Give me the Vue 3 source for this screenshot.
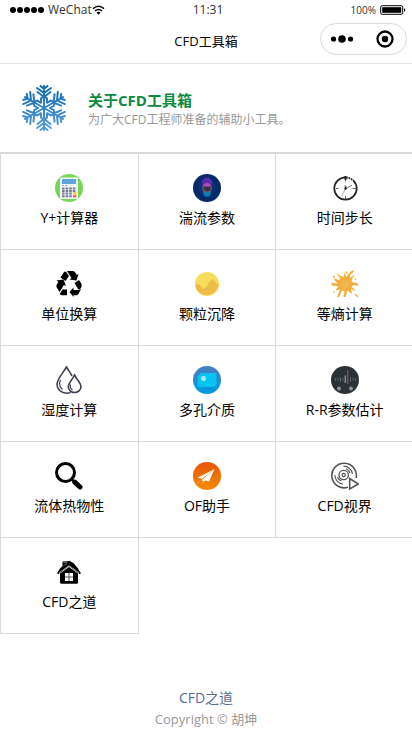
<template>
    <div class="page">
        <header>
            <div class="status-bar">
                <div class="status-left">
                    <svg class="signal" width="35" height="8" viewBox="0 0 35 8">
                        <circle v-for="n in 5" :key="n" :cx="n * 7 - 3" cy="4" r="3" />
                    </svg>
                    <span>WeChat</span>
                    <svg class="wifi" width="13" height="10" viewBox="0 0 13 10">
                        <path d="M1 3.6Q6.5 -1 12 3.6M3 5.9Q6.5 3 10 5.9" fill="none" stroke="#000" stroke-width="1.5" />
                        <path d="M4.5 7.5Q6.5 6 8.5 7.5L6.5 9.7z" />
                    </svg>
                </div>
                <span class="status-time">11:31</span>
                <div class="status-right">
                    <span>100%</span>
                    <svg width="27" height="10" viewBox="0 0 27 10">
                        <rect x=".7" y=".7" width="22" height="8.6" rx="1.5" fill="#fff" stroke="#000" />
                        <rect x="2.2" y="2.2" width="19" height="5.6" />
                        <path d="M24 3Q26.5 5 24 7z" />
                    </svg>
                </div>
            </div>
            <div class="nav-bar">
                <h1 class="nav-title">CFD工具箱</h1>
                <div class="capsule">
                    <button type="button" aria-label="更多">
                        <svg width="24" height="10" viewBox="0 0 24 10">
                            <circle cx="3.5" cy="5" r="2.6" />
                            <circle cx="12" cy="5" r="3.8" />
                            <circle cx="20.5" cy="5" r="2.6" />
                        </svg>
                    </button>
                    <button type="button" aria-label="关闭">
                        <svg width="18" height="18" viewBox="0 0 18 18">
                            <circle cx="9" cy="9" r="7.5" fill="none" stroke="#000" stroke-width="2.3" />
                            <circle cx="9" cy="9" r="3.2" />
                        </svg>
                    </button>
                </div>
            </div>
        </header>

        <a class="about" href="#about">
            <svg class="about-logo" width="48" height="48" viewBox="-24 -24 48 48">
                <defs>
                    <linearGradient id="snow" gradientUnits="userSpaceOnUse" x1="0" y1="-23" x2="0" y2="23">
                        <stop offset="0" stop-color="#0f68b0" />
                        <stop offset="1" stop-color="#5b9fd8" />
                    </linearGradient>
                </defs>
                <path :d="snowPath" fill="none" stroke="url(#snow)" stroke-width="2" stroke-linecap="round" />
            </svg>
            <div class="about-text">
                <div class="about-title">关于CFD工具箱</div>
                <div class="about-desc">为广大CFD工程师准备的辅助小工具。</div>
            </div>
        </a>

        <main class="grid">
            <a class="grid-item" v-for="item in tools" :key="item.icon" :href="'#' + item.icon">
                <svg class="grid-icon" viewBox="0 0 28 28">
                    <g v-if="item.icon === 'yplus'">
                        <circle cx="14" cy="14" r="14" fill="#76d55b" />
                        <rect x="5" y="3.5" width="18" height="21.5" rx="1" fill="#f4f5f8" />
                        <rect x="7" y="5" width="14" height="5" fill="#5aa6dc" />
                        <path d="M7 11.5H12.5" stroke="#969bab" stroke-dasharray="2 1" />
                        <path d="M7 14.5H21M7 17H21M7 19.5H17M7 22.2H17" stroke="#747b93" stroke-width="2" stroke-dasharray="2.6 1" />
                        <rect x="18" y="18" width="3.5" height="2.7" fill="#f8cc35" />
                        <rect x="18" y="21.3" width="3.5" height="2" fill="#ed5942" />
                    </g>
                    <g v-else-if="item.icon === 'turbulence'">
                        <circle cx="14" cy="14" r="14" fill="#06296a" />
                        <circle cx="14" cy="13.5" r="9" fill="#112f76" />
                        <path d="M9 8.5a5 5 0 0 1 10 0l-1 4h-8z" fill="#5b2bad" />
                        <circle cx="14" cy="19" r="3.7" fill="#087eb7" />
                        <circle cx="14" cy="14" r="4.2" fill="#303445" stroke="#77617d" stroke-width="1.2" />
                        <path d="M10.5 12.5a3.5 3.5 0 0 1 7 0z" fill="#b249bd" />
                    </g>
                    <g v-else-if="item.icon === 'timestep'" fill="none" stroke="#222">
                        <circle cx="14.5" cy="14.5" r="11.2" stroke-width="1.7" />
                        <path d="M17.5 2.5L17 5M20 3L19 6M22.5 4.500L21 7" stroke="#fff" stroke-width=".8" />
                        <path d="M14.5 5V7.5M14.5 22V25M5 14.5H7.5M21.5 14.5H25" stroke="#666" />
                        <path d="M14.5 2V6" stroke-width="2" />
                        <path d="M14.5 15L21 11" stroke="#777" />
                        <path d="M16 12L10.5 22" stroke="#999" stroke-width=".8" />
                        <path d="M14 11.5L15 15" />
                        <circle cx="14.5" cy="14.5" r="1.2" fill="#222" stroke="none" />
                    </g>
                    <g v-else-if="item.icon === 'unit'">
                        <path d="M5.5 7.5L9 2.2Q10 1 11.3 2.2L14 6L10.5 11z" />
                        <path d="M12 1H18Q19.5 1 20.3 2.5L21.8 5L23.5 4L21.5 10.5L14.5 9.5L16.5 8z" />
                        <path d="M1.5 10.5L8.5 9.5L11 16L9 15L4.5 22L1.5 17Q1 15.5 1.8 14.5L3.3 12z" />
                        <path d="M5 23.5L7.5 19.5H12V25.3H7Q4.8 25.3 5 23.5z" />
                        <path d="M19.5 13L24 10L26.5 14Q27 16 26 18Q25 19.5 23 19z" />
                        <path d="M14.5 22L18.5 17.5V20H23L26 19L23.5 24Q22.8 25.3 21.500 25.300H18.500V27z" />
                    </g>
                    <g v-else-if="item.icon === 'settling'">
                        <circle cx="14" cy="14" r="12" fill="#f4de5b" />
                        <path d="M2.2 16Q5 11.5 7.5 15.5T11.5 18.5Q13.5 17 15.5 13Q19 6.5 22 11.5Q23.5 14 25.7 14.5A12 12 0 0 1 2.2 16z" fill="#efbd47" />
                        <path d="M2.5 16.5Q5 11.5 7.5 15.5T11.5 18.5Q13.5 17 15.5 13Q19 6.5 22 11.5" fill="none" stroke="#f7cf66" />
                    </g>
                    <g v-else-if="item.icon === 'isentropic'">
                        <path d="M9 8L5 3L11 6.5L13 7L13.5 2L15.5 7L19.5 1.5L23 .5L20 3.5L18.5 8L23.5 5L20.5 10L21 12L26 13L28 16L23 15L20.5 16.5L25 21.5L20 19L21 24L16.5 20.5L14.5 27L12.5 27L13.5 21L11 20.5L8 27H6L9 19.5L4 20.5L7.5 16.5L1 15.5L0 13L6.5 13.5L2.5 8.5L8.5 10z" fill="#f1af3d" />
                        <path d="M15 1.5L16.5 4M19 4L22.5 1M2 6L4 7.5M24 24L27 27" stroke="#f1af3d" stroke-width="1.3" />
                        <circle cx="14" cy="14" r="4.5" fill="#f0b64d" />
                        <circle cx="24.5" cy="9" r=".8" fill="#f1af3d" />
                        <circle cx="3" cy="22" r=".8" fill="#f1af3d" />
                    </g>
                    <g v-else-if="item.icon === 'humidity'" fill="none" stroke="#3d4050" stroke-width="1.6">
                        <path d="M15.500 26.500Q13.500 27.200 11.500 27.200C6 27.200 2 23 2 18.300C2 13.500 7.500 7.500 11.500 1C13.500 4.500 15.500 7 17 10" />
                        <path d="M19.5 9C22.5 14.5 26 17 26 20.8C26 24 23 26.5 19.5 26.5S13.3 24 13.3 20.8C13.3 17 17 14.5 19.5 9z" />
                        <path d="M5.5 14Q3 19.5 7.5 23.5M15.5 18.5Q14.5 22 17.5 24" stroke-width="1.2" />
                    </g>
                    <g v-else-if="item.icon === 'porous'">
                        <defs>
                            <linearGradient id="porous" x1="0" y1="0" x2="0" y2="1">
                                <stop offset=".3" stop-color="#3f82c4" />
                                <stop offset=".8" stop-color="#0797dc" />
                            </linearGradient>
                        </defs>
                        <circle cx="14" cy="14" r="14" fill="url(#porous)" />
                        <path d="M4.5 10.5L8 7H23.5V18.5L21.5 21H7Q4.5 21 4.5 18.5z" fill="#05c3f2" />
                        <circle cx="10.5" cy="12.5" r="2.5" fill="#a5ebfc" />
                    </g>
                    <g v-else-if="item.icon === 'rr'">
                        <circle cx="14" cy="14" r="14" fill="#2b3235" />
                        <path d="M4.5 12V15M7 12V15M9.5 11V16M12 12V15M19.5 11V16M22 12V15M24.5 12V15" stroke="#596063" />
                        <path d="M14.3 9.5V17" stroke="#858b8c" stroke-width="1.5" />
                        <path d="M16.7 4V18" stroke="#884f80" stroke-width="1.2" />
                        <circle cx="8" cy="22.5" r="2" fill="#8a9599" />
                        <circle cx="20" cy="22.5" r="2" fill="#8a9599" />
                    </g>
                    <g v-else-if="item.icon === 'fluid'" fill="none" stroke="#000">
                        <circle cx="10.5" cy="10.5" r="9" stroke-width="3" />
                        <path d="M16.5 17L19 19.5" stroke-width="2" />
                        <path d="M19.8 20.2L25 25" stroke-width="5" stroke-linecap="round" />
                    </g>
                    <g v-else-if="item.icon === 'openfoam'">
                        <defs>
                            <linearGradient id="foam" x1="0" y1="0" x2="0" y2="1">
                                <stop offset="0" stop-color="#e65304" />
                                <stop offset="1" stop-color="#f58b00" />
                            </linearGradient>
                        </defs>
                        <circle cx="14" cy="14" r="14" fill="url(#foam)" />
                        <path d="M21.5 7L5 15.5L9 17z" fill="#fff" />
                        <path d="M21.5 7L9.5 17.5V20L12 18.5L16 19.8z" fill="#fff" />
                        <path d="M8.5 18L4 21.5M12 20L8.5 22.5" stroke="#f6b270" stroke-width=".7" />
                    </g>
                    <g v-else-if="item.icon === 'video'" fill="none" stroke="#555" stroke-width="1.6">
                        <path d="M17 25.2A12.3 12.3 0 1 1 25.2 16" />
                        <circle cx="12.7" cy="13" r="4.7" stroke-width="1.3" />
                        <circle cx="12.7" cy="13" r="1.6" stroke-width="1.2" />
                        <path d="M12.5 4.2A9 9 0 0 1 21.5 12M15 6.8A6.5 6.5 0 0 1 19 11M3.8 13A9 9 0 0 0 12 22M6.5 15A6.5 6.5 0 0 0 10.5 19" stroke-width="1.2" />
                        <path d="M18.7 16.5V27L27.3 22z" />
                    </g>
                    <g v-else>
                        <path d="M7.5 8V3.5L12.5 3.2L14.5 2.7L19 5.5L23 10.500L26 15.500L24.500 16L14 8L3.500 16L2 15.500L4.500 11z" />
                        <path d="M5 15.5L14 9L23 15.5V24.5Q23 25.7 21.5 25.7H6.5Q5 25.7 5 24.5z" />
                        <path d="M4 14.8L14 7.500L24 14.8" fill="none" stroke="#aaa" stroke-width=".8" />
                        <path d="M8.500 4.500H12M8.500 7.500L12 5.500" fill="none" stroke="#999" stroke-width=".7" />
                        <rect x="10" y="15" width="8" height="8" fill="#fff" />
                        <path d="M14 15V23M10 19H18" stroke="#555" />
                    </g>
                </svg>
                <span class="grid-label">{{item.name}}</span>
            </a>
        </main>

        <footer>
            <a class="footer-link" href="#cfd">CFD之道</a>
            <div class="footer-text">Copyright © 胡坤</div>
        </footer>
    </div>
</template>

<script setup>
const tools = [
    { name: 'Y+计算器', icon: 'yplus' },
    { name: '湍流参数', icon: 'turbulence' },
    { name: '时间步长', icon: 'timestep' },
    { name: '单位换算', icon: 'unit' },
    { name: '颗粒沉降', icon: 'settling' },
    { name: '等熵计算', icon: 'isentropic' },
    { name: '湿度计算', icon: 'humidity' },
    { name: '多孔介质', icon: 'porous' },
    { name: 'R-R参数估计', icon: 'rr' },
    { name: '流体热物性', icon: 'fluid' },
    { name: 'OF助手', icon: 'openfoam' },
    { name: 'CFD视界', icon: 'video' },
    { name: 'CFD之道', icon: 'home' }
]

// 雪花的一个分支,旋转六次
const branch = [
    [[0, 0], [0, -22]],
    [[-3.5, -22], [0, -19], [3.5, -22]],
    [[-7, -20], [0, -15], [7, -20]],
    [[-6.5, -16], [0, -11], [6.5, -16]],
    [[-3, -5.2], [-3, -9.5], [0, -12], [3, -9.5], [3, -5.2]]
]
const snowPath = [0, 60, 120, 180, 240, 300].map(deg => {
    const a = deg * Math.PI / 180
    return branch.map(line => 'M' + line.map(([x, y]) =>
        (x * Math.cos(a) - y * Math.sin(a)).toFixed(2) + ' ' + (x * Math.sin(a) + y * Math.cos(a)).toFixed(2)
    ).join('L')).join('')
}).join('')
</script>

<style>
body{
    background-color: #fff;
}
</style>

<style scoped>
.page{
    overflow: hidden;
    font-family: "Open Sans", "Noto Sans CJK SC", sans-serif;
    color: #000;
}
a{
    text-decoration: none;
    color: inherit;
}
svg{
    display: block;
    flex-shrink: 0;
}
header{
    border-bottom: 1px solid #e5e5e5;
}
.status-bar{
    display: grid;
    grid-template-columns: 1fr auto 1fr;
    align-items: center;
    height: 20px;
    padding: 0 5px 0 9px;
    font-size: 12px;
    line-height: 20px;
    color: #333;
}
.status-left,
.status-right{
    display: flex;
    align-items: center;
}
.signal{
    margin-right: 4px;
}
.status-right{
    justify-content: flex-end;
    gap: 4px;
    font-size: 10px;
}
.nav-bar{
    display: grid;
    grid-template-columns: 1fr auto 1fr;
    height: 43px;
    padding: 0 5px;
}
.nav-title{
    grid-column: 2;
    margin: 0;
    font-size: 13px;
    font-weight: 400;
    line-height: 43px;
}
.capsule{
    display: flex;
    justify-self: end;
    box-sizing: border-box;
    width: 87px;
    height: 32px;
    margin-top: 3px;
    border: 1px solid #dcdcdc;
    border-radius: 16px;
}
.capsule button{
    display: flex;
    flex: 1;
    align-items: center;
    justify-content: center;
    padding: 0;
    border: 0;
    background: none;
    cursor: pointer;
}
.about{
    display: flex;
    align-items: center;
    gap: 20px;
    padding: 20px;
    border-bottom: 1px solid #d9d9d9;
}
.about-text{
    padding-top: 4px;
}
.about-title{
    font-size: 15px;
    font-weight: 700;
    line-height: 20px;
    color: #0b8b3f;
}
.about-desc{
    font-size: 12px;
    line-height: 20px;
    color: #999;
}
.grid{
    display: grid;
    grid-template-columns: repeat(3, 1fr);
    margin-right: -1px;
}
.grid-item{
    display: flex;
    flex-direction: column;
    align-items: center;
    gap: 5px;
    margin: 0 -1px -1px 0;
    padding: 20px 10px;
    border: 1px solid #d9d9d9;
}
.grid-icon{
    width: 28px;
    height: 28px;
}
.grid-label{
    font-size: 14px;
    line-height: 22px;
    white-space: nowrap;
}
footer{
    margin-top: 54px;
    text-align: center;
}
.footer-link{
    display: block;
    font-size: 14px;
    line-height: 22px;
    color: #586c94;
}
.footer-text{
    font-size: 13px;
    line-height: 20px;
    color: #999;
}
</style>
